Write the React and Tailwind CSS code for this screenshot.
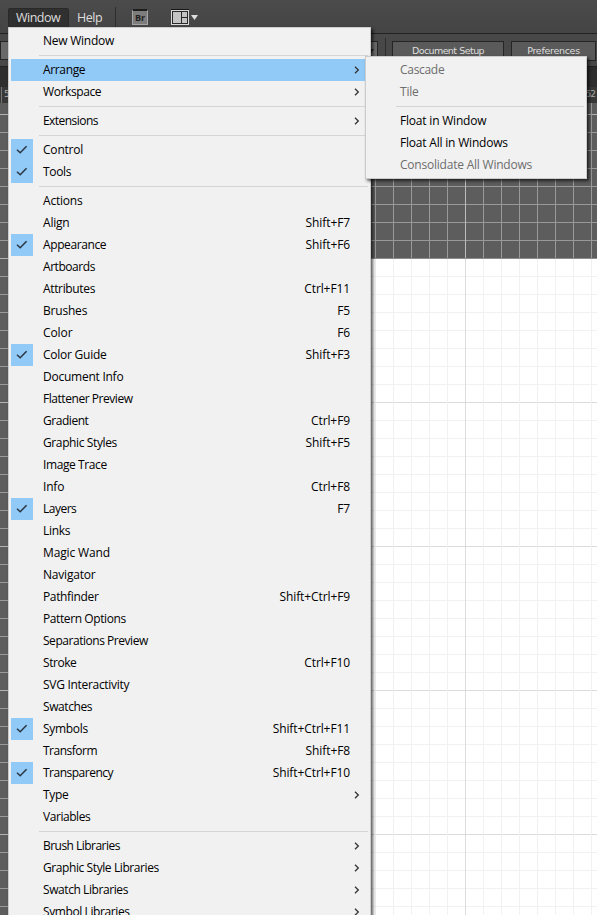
import React from "react";

const sep = { sep: true };

const windowMenu = [
  { label: "New Window", fit: "tracking-[-0.25px]" },
  sep,
  { label: "Arrange", sub: true, active: true, fit: "tracking-[-0.35px]" },
  { label: "Workspace", sub: true, fit: "tracking-[-0.4px]" },
  sep,
  { label: "Extensions", sub: true, fit: "tracking-[-0.55px]" },
  sep,
  { label: "Control", checked: true },
  { label: "Tools", checked: true, fit: "tracking-[-0.35px]" },
  sep,
  { label: "Actions" },
  { label: "Align", keys: "Shift+F7" },
  { label: "Appearance", keys: "Shift+F6", checked: true, fit: "tracking-[-0.4px]" },
  { label: "Artboards", fit: "tracking-[-0.45px]" },
  { label: "Attributes", keys: "Ctrl+F11", fit: "tracking-[-0.35px]" },
  { label: "Brushes", keys: "F5", fit: "tracking-[-0.2px]" },
  { label: "Color", keys: "F6", fit: "tracking-[-0.1px]" },
  { label: "Color Guide", keys: "Shift+F3", checked: true, fit: "tracking-[-0.25px]" },
  { label: "Document Info", fit: "tracking-[-0.25px]" },
  { label: "Flattener Preview", fit: "tracking-[-0.45px]" },
  { label: "Gradient", keys: "Ctrl+F9", fit: "tracking-[-0.45px]" },
  { label: "Graphic Styles", keys: "Shift+F5", fit: "tracking-[-0.38px]" },
  { label: "Image Trace", fit: "tracking-[-0.4px]" },
  { label: "Info", keys: "Ctrl+F8" },
  { label: "Layers", keys: "F7", checked: true, fit: "tracking-[-0.5px]" },
  { label: "Links", fit: "tracking-[-0.3px]" },
  { label: "Magic Wand", fit: "tracking-[-0.15px]" },
  { label: "Navigator" },
  { label: "Pathfinder", keys: "Shift+Ctrl+F9", fit: "tracking-[-0.35px]" },
  { label: "Pattern Options", fit: "tracking-[-0.4px]" },
  { label: "Separations Preview", fit: "tracking-[-0.46px]" },
  { label: "Stroke", keys: "Ctrl+F10", fit: "tracking-[-0.45px]" },
  { label: "SVG Interactivity", fit: "tracking-[-0.3px]" },
  { label: "Swatches", fit: "tracking-[-0.4px]" },
  { label: "Symbols", keys: "Shift+Ctrl+F11", checked: true, fit: "tracking-[-0.3px]" },
  { label: "Transform", keys: "Shift+F8", fit: "tracking-[-0.5px]" },
  { label: "Transparency", keys: "Shift+Ctrl+F10", checked: true, fit: "tracking-[-0.5px]" },
  { label: "Type", sub: true, fit: "tracking-[-0.35px]" },
  { label: "Variables", fit: "tracking-[-0.45px]" },
  sep,
  { label: "Brush Libraries", sub: true, fit: "tracking-[-0.53px]" },
  { label: "Graphic Style Libraries", sub: true, fit: "tracking-[-0.41px]" },
  { label: "Swatch Libraries", sub: true, fit: "tracking-[-0.42px]" },
  { label: "Symbol Libraries", sub: true, fit: "tracking-[-0.4px]" },
];

const arrangeMenu = [
  { label: "Cascade", disabled: true, fit: "tracking-[-0.3px]" },
  { label: "Tile", disabled: true },
  sep,
  { label: "Float in Window" },
  { label: "Float All in Windows" },
  { label: "Consolidate All Windows", disabled: true, fit: "tracking-[-0.22px]" },
];

function Check() {
  return (
    <svg width="12" height="10" viewBox="0 0 12 10" fill="none" stroke="#2b3540" strokeWidth="1.5">
      <path d="M1 4.8 L4.2 7.8 L10.6 1.2" />
    </svg>
  );
}

function Chevron() {
  return (
    <svg width="6" height="8" viewBox="0 0 6 8" fill="none" stroke="#333" strokeWidth="1.3">
      <path d="M1 0.8 L4.3 4 L1 7.2" />
    </svg>
  );
}

function Menu({ items, className }) {
  return (
    <div
      className={`flex flex-col border border-[#ccc] bg-[#f1f1f1] p-[2px] shadow-[2px_2px_3px_0px_rgba(0,0,0,0.65)] ${className}`}
    >
      {items.map((item, i) =>
        item.sep ? (
          <div key={i} className="flex h-[7px] shrink-0 items-center pl-7">
            <div className="h-px w-full bg-[#d5d5d5]" />
          </div>
        ) : (
          <div
            key={i}
            className={`flex h-[22px] shrink-0 items-center ${item.active ? "bg-[#91c9f7]" : ""} ${
              item.disabled ? "text-[#6d6d6d]" : "text-black"
            }`}
          >
            <div
              className={`flex h-[22px] w-[22px] shrink-0 items-center justify-center ${
                item.checked ? "bg-[#91c9f7]" : ""
              }`}
            >
              {item.checked && <Check />}
            </div>
            <span className={`ml-[10px] grow whitespace-nowrap ${item.fit || "tracking-[-0.2px]"}`}>{item.label}</span>
            {item.keys && <span className="mr-[18px] tracking-[-0.1px] whitespace-nowrap">{item.keys}</span>}
            {item.sub && (
              <span className="mr-[8px]">
                <Chevron />
              </span>
            )}
          </div>
        )
      )}
    </div>
  );
}

function Canvas() {
  const xs = Array.from({ length: 34 }, (_, i) => -3 + i * 18);
  const ys = Array.from({ length: 46 }, (_, i) => 11 + i * 18);
  return (
    <svg className="block" width="597" height="812" shapeRendering="crispEdges">
      <rect width="597" height="812" fill="#5d5d5d" />
      {ys.map((y) => (
        <rect key={y} x="0" y={y} width="597" height="1" fill={(y - 11) % 144 === 0 ? "#b4b4b4" : "#999"} />
      ))}
      {xs.map((x) => (
        <rect key={x} x={x} y="0" width="1" height="812" fill={(x - 33) % 144 === 0 ? "#bdbdbd" : "#999"} />
      ))}
      <rect x="177" y="155" width="420" height="657" fill="#8c8c8c" />
      <rect x="178" y="156" width="419" height="656" fill="#fff" />
      {ys.filter((y) => y > 156).map((y) => (
        <rect key={y} x="178" y={y} width="419" height="1" fill={(y - 11) % 144 === 0 ? "#dcdcdc" : "#f1f1f1"} />
      ))}
      {xs.filter((x) => x > 180).map((x) => (
        <rect key={x} x={x} y="156" width="1" height="656" fill={(x - 33) % 144 === 0 ? "#dcdcdc" : "#f1f1f1"} />
      ))}
    </svg>
  );
}

export default function App() {
  return (
    <div className="relative h-[915px] w-[597px] overflow-hidden bg-[#474747] font-['Open_Sans','Noto_Sans',sans-serif] text-[12px] leading-[22px] tracking-[-0.2px]">
      <div className="flex h-[33px] items-start bg-linear-to-b from-[#4b4b4b] to-[#444] text-[12.5px] text-[#dedede]">
        <div className="mt-[8px] ml-[8px] flex h-[20px] w-[61px] items-center rounded-t-[2px] border border-[#292929] bg-[#303030] pl-[7px] tracking-[-0.5px]">
          Window
        </div>
        <div className="mt-[8px] ml-[8px] flex h-[20px] w-[38px] items-center tracking-[-0.5px]">Help</div>
        <div className="mt-[7px] h-[20px] w-px bg-[#2d2d2d]" />
        <div className="mt-[9px] ml-[16px] flex h-[16px] w-[16px] items-center justify-center border border-t-2 border-[#a5a5a5] border-t-[#1d1d1d] bg-[#7c7c7c] text-[9px] font-bold tracking-normal text-[#222]">
          Br
        </div>
        <svg className="mt-[9px] ml-[23px]" width="28" height="16" viewBox="0 0 28 16" shapeRendering="crispEdges">
          <rect x="0" y="0" width="18" height="1" fill="#151515" />
          <rect x="0" y="1" width="18" height="15" fill="#dadada" />
          <rect x="1" y="2" width="16" height="13" fill="#2a2a2a" />
          <rect x="2" y="3" width="8" height="11" fill="#c4c4c4" />
          <rect x="11" y="3" width="5" height="5" fill="#c4c4c4" />
          <rect x="11" y="9" width="5" height="5" fill="#c4c4c4" />
          <path d="M20 6 H27 L23.5 11 Z" fill="#dedede" shapeRendering="auto" />
        </svg>
      </div>
      <div className="flex h-[34px] items-start border-y border-[#222] bg-[#484848] pt-[7px] text-[11px] text-[#dedede]">
        <div className="flex h-[19px] w-[378px] items-center justify-end border border-[#262626] bg-[#696969] pr-[3px]">
          <svg width="5" height="4" viewBox="0 0 5 4" fill="#2a2a2a">
            <path d="M0 0 H5 L2.5 4 Z" />
          </svg>
        </div>
        <div className="-mt-[3px] ml-[7px] h-[24px] w-px bg-[#2d2d2d]" />
        <div className="ml-[6px] flex h-[20px] w-[112px] items-center justify-center border border-[#252525] bg-[#5a5a5a] pb-px font-['DejaVu_Sans',sans-serif] text-[9.5px] tracking-[-0.6px] whitespace-nowrap [word-spacing:0.5px]">
          Document Setup
        </div>
        <div className="ml-[7px] flex h-[20px] w-[85px] items-center justify-center border border-[#252525] bg-[#5a5a5a] pb-px font-['DejaVu_Sans',sans-serif] text-[9.5px] tracking-[-0.3px] whitespace-nowrap">
          Preferences
        </div>
      </div>
      <div className="h-[20px] bg-[#2e2e2e]" />
      <div className="flex h-[16px] items-start justify-between bg-[#383838] font-['DejaVu_Sans',sans-serif] text-[9px] leading-[14px] tracking-normal text-[#aaa]">
        <div className="flex">
          <div className="ml-px h-[16px] w-px bg-[#777]" />
          <span className="ml-[2px]">5</span>
        </div>
        <span className="mr-[2px] tracking-[-1px]">52</span>
      </div>
      <Canvas />
      <Menu items={windowMenu} className="absolute top-[27px] left-[8px] w-[363px]" />
      <Menu items={arrangeMenu} className="absolute top-[56px] left-[365px] w-[222px]" />
    </div>
  );
}
